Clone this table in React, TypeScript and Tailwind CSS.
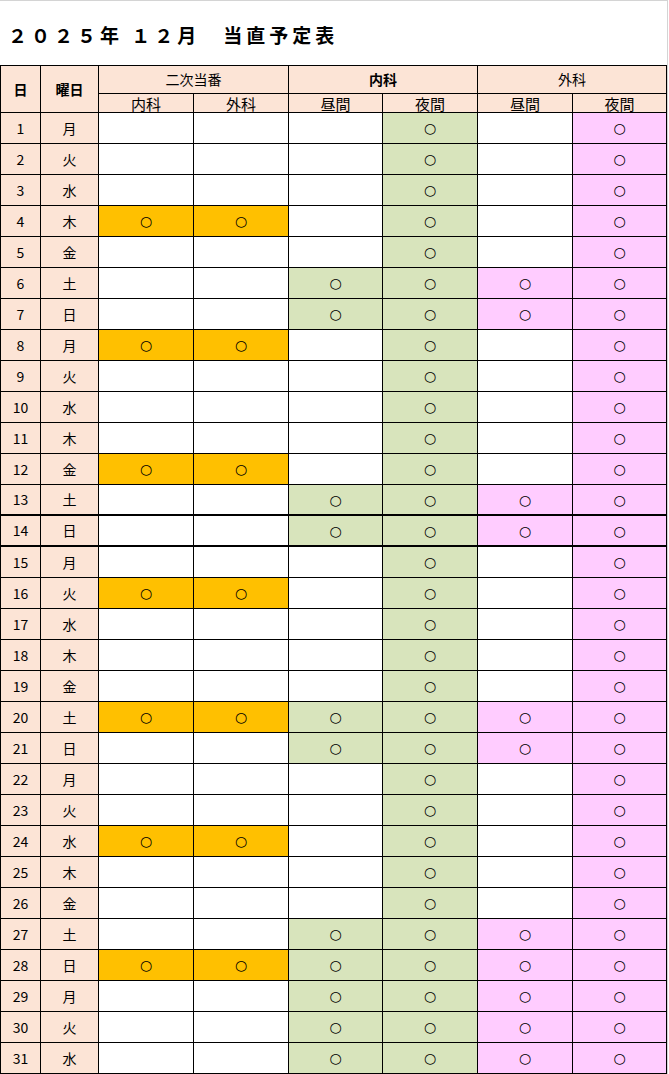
import React from "react";

const WEEK = ["月", "火", "水", "木", "金", "土", "日"];
const SECOND_DAYS = [4, 8, 12, 16, 20, 24, 28];
const DAYTIME_DAYS = [6, 7, 13, 14, 20, 21, 27, 28, 29, 30, 31];

const cell = "flex items-center justify-center border-r border-b border-black";

function Circle() {
  return (
    <span
      className="text-[14px] leading-none"
      style={{ fontFamily: '"DejaVu Sans", sans-serif' }}
    >
      ○
    </span>
  );
}

export default function App() {
  const days = Array.from({ length: 31 }, (_, i) => i + 1);

  return (
    <div
      className="w-[668px] bg-white border-t border-r border-[#d4d4d4] text-black"
      style={{ fontFamily: '"Noto Sans CJK JP", "Noto Sans", sans-serif' }}
    >
      {/* Title */}
      <div className="h-[64px] flex items-center pl-[8px] pt-[2px]">
        <h1 className="text-[19px] font-bold tracking-[4px] leading-none">
          ２０２５年 １２月　当直予定表
        </h1>
      </div>

      {/* Schedule grid */}
      <div className="grid grid-cols-[40px_58px_95px_95px_94px_95px_95px_94px] border-t border-l border-black w-[667px] text-[14px]">
        {/* Header */}
        <div className={`${cell} row-span-2 bg-[#fce4d6] font-bold`}>日</div>
        <div className={`${cell} row-span-2 bg-[#fce4d6] font-bold`}>曜日</div>
        <div className={`${cell} col-span-2 h-[28px] bg-[#fce4d6]`}>二次当番</div>
        <div className={`${cell} col-span-2 h-[28px] bg-[#fce4d6] font-bold`}>内科</div>
        <div className={`${cell} col-span-2 h-[28px] bg-[#fce4d6]`}>外科</div>
        {["内科", "外科", "昼間", "夜間", "昼間", "夜間"].map((t, i) => (
          <div key={i} className={`${cell} h-[19px] bg-[#fce4d6] leading-none text-[15px]`}>
            {t}
          </div>
        ))}

        {/* Rows */}
        {days.map((d) => {
          const thick = d === 13 || d === 14 ? "border-b-2" : "";
          const second = SECOND_DAYS.includes(d);
          const daytime = DAYTIME_DAYS.includes(d);
          return (
            <React.Fragment key={d}>
              <div className={`${cell} ${thick} h-[31px] bg-[#fce4d6]`}>{d}</div>
              <div className={`${cell} ${thick} h-[31px] bg-[#fce4d6]`}>{WEEK[(d - 1) % 7]}</div>
              <div className={`${cell} ${thick} h-[31px] ${second ? "bg-[#ffc000]" : "bg-white"}`}>
                {second && <Circle />}
              </div>
              <div className={`${cell} ${thick} h-[31px] ${second ? "bg-[#ffc000]" : "bg-white"}`}>
                {second && <Circle />}
              </div>
              <div className={`${cell} ${thick} h-[31px] ${daytime ? "bg-[#d8e4bc]" : "bg-white"}`}>
                {daytime && <Circle />}
              </div>
              <div className={`${cell} ${thick} h-[31px] bg-[#d8e4bc]`}>
                <Circle />
              </div>
              <div className={`${cell} ${thick} h-[31px] ${daytime ? "bg-[#ffccff]" : "bg-white"}`}>
                {daytime && <Circle />}
              </div>
              <div className={`${cell} ${thick} h-[31px] bg-[#ffccff]`}>
                <Circle />
              </div>
            </React.Fragment>
          );
        })}
      </div>
    </div>
  );
}
